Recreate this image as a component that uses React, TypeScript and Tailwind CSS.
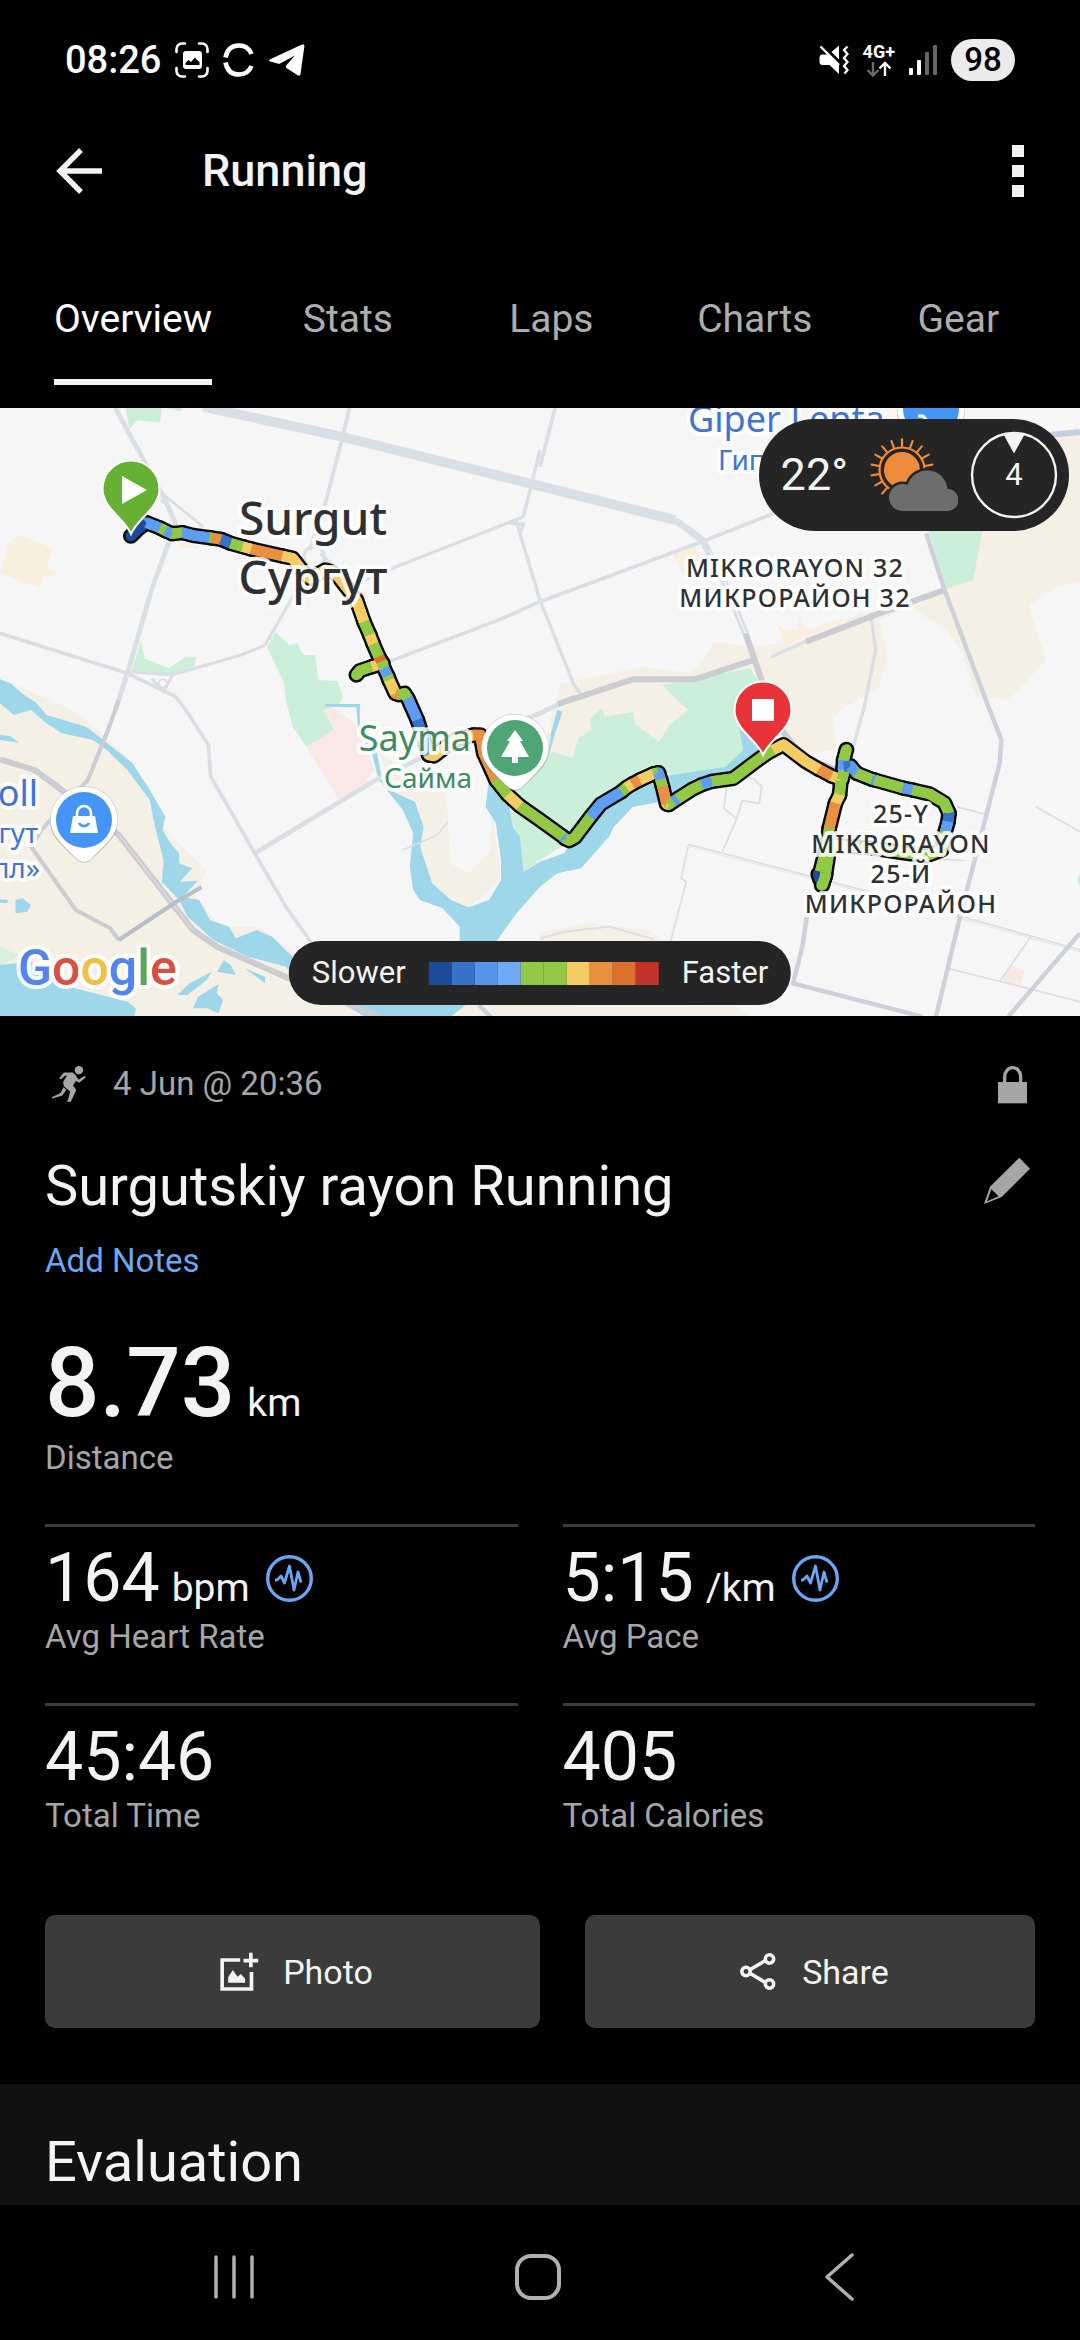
import type { ReactNode } from "react";

type TabProps = {
  label: string;
  active?: boolean;
};

const TABS = ["Stats", "Laps", "Charts", "Gear"];

const NAVY = "#1d4b99";
const BLUE = "#3772c9";
const SKY = "#5f9df2";
const GREEN = "#92c944";
const YELLOW = "#f4cd62";
const ORANGE = "#ea9041";
const RUST = "#dc712d";

const ROUTE: [string, string][] = [
  [NAVY, "380,408 400,388 425,368"],
  [SKY, "425,368 465,384"],
  [GREEN, "465,384 480,392"],
  [SKY, "480,392 500,401"],
  [GREEN, "500,401 530,398"],
  [SKY, "530,398 560,406 608,413"],
  [GREEN, "608,413 616,414"],
  [ORANGE, "616,414 642,418"],
  [BLUE, "642,418 670,430"],
  [GREEN, "670,430 705,440"],
  [YELLOW, "705,440 730,447"],
  [ORANGE, "730,447 820,468"],
  [YELLOW, "820,468 850,475 880,515 900,535 945,510 975,520 1005,560 1035,600 1057,665"],
  [GREEN, "1057,665 1074,705"],
  [YELLOW, "1074,705 1084,732"],
  [GREEN, "1084,732 1100,770"],
  [GREEN, "1035,825 1045,812 1080,800"],
  [YELLOW, "1080,800 1112,790"],
  [RUST, "1100,770 1108,785"],
  [GREEN, "1108,785 1115,805"],
  [SKY, "1115,805 1126,828"],
  [GREEN, "1126,828 1130,840"],
  [YELLOW, "1130,840 1148,880"],
  [ORANGE, "1148,880 1158,884"],
  [GREEN, "1158,884 1175,880 1184,895"],
  [SKY, "1184,895 1212,960"],
  [BLUE, "1212,960 1228,1010"],
  [SKY, "1228,1010 1245,1065"],
  [YELLOW, "1245,1065 1260,1068 1320,1020 1375,1005"],
  [ORANGE, "1375,1005 1395,1005 1405,1060 1440,1140"],
  [GREEN, "1440,1140 1475,1185"],
  [YELLOW, "1475,1185 1510,1218"],
  [GREEN, "1510,1218 1568,1260 1635,1310"],
  [SKY, "1635,1310 1641,1316"],
  [GREEN, "1641,1316 1653,1322 1670,1312 1715,1250"],
  [SKY, "1715,1250 1745,1212 1805,1175"],
  [GREEN, "1805,1175 1820,1162"],
  [YELLOW, "1820,1162 1836,1152"],
  [ORANGE, "1836,1152 1858,1140"],
  [YELLOW, "1858,1140 1898,1121"],
  [GREEN, "1898,1121 1912,1118"],
  [SKY, "1912,1118 1918,1138"],
  [GREEN, "1918,1138 1924,1160"],
  [ORANGE, "1924,1160 1936,1212"],
  [YELLOW, "1936,1212 1942,1214"],
  [GREEN, "1942,1214 1956,1204"],
  [SKY, "1956,1204 1968,1196"],
  [GREEN, "1968,1196 2010,1168 2038,1154"],
  [SKY, "2038,1154 2068,1144"],
  [GREEN, "2068,1144 2130,1135 2190,1088 2225,1062 2245,1050"],
  [YELLOW, "2245,1050 2275,1034 2340,1085 2378,1108"],
  [ORANGE, "2378,1108 2415,1128"],
  [YELLOW, "2415,1128 2442,1138"],
  [GREEN, "2445,1140 2452,1110"],
  [SKY, "2448,1110 2450,1080"],
  [GREEN, "2450,1080 2458,1048"],
  [BLUE, "2450,1100 2470,1098"],
  [SKY, "2470,1098 2488,1120"],
  [GREEN, "2488,1120 2532,1138"],
  [SKY, "2532,1138 2540,1140"],
  [GREEN, "2540,1140 2622,1164"],
  [SKY, "2622,1164 2650,1170"],
  [GREEN, "2650,1170 2700,1182 2742,1208 2756,1240"],
  [BLUE, "2756,1240 2753,1265"],
  [SKY, "2753,1265 2745,1295"],
  [GREEN, "2745,1295 2735,1350 2690,1368 2620,1358 2540,1345 2410,1335"],
  [GREEN, "2442,1142 2438,1185"],
  [YELLOW, "2438,1185 2426,1210"],
  [ORANGE, "2426,1210 2408,1285"],
  [GREEN, "2408,1285 2402,1340 2405,1370 2396,1430 2386,1456"],
  [GREEN, "2398,1350 2382,1415"],
  [NAVY, "2376,1422 2382,1440"],
  [GREEN, "2398,1420 2388,1456"],
];

const LEGEND = [
  "bg-[#1d4b99]",
  "bg-[#3772c9]",
  "bg-[#5695eb]",
  "bg-[#6ea9f8]",
  "bg-[#92c944]",
  "bg-[#92c944]",
  "bg-[#f4cd62]",
  "bg-[#ea9041]",
  "bg-[#dc712d]",
  "bg-[#c1332a]",
];

const SUN_RAYS = [-140, -120, -100, -80, -60, -40, -20, 0, 20, 40, 60, 80];

function StatusBar() {
  return (
    <div className="flex h-[120px] items-center justify-between px-[65px] text-white">
      <div className="flex items-center gap-3.5">
        <span className="text-[38px] leading-[46px] font-medium">08:26</span>
        <svg viewBox="0 0 34 36" className="h-9 w-[34px]" fill="none" aria-hidden>
          <path
            d="M1.5 10V7a5.500 5.500 0 0 1 5.500-5.500h3M24 1.500h3A5.500 5.500 0 0 1 32.500 7v3M32.500 26v3a5.500 5.500 0 0 1-5.500 5.500h-3M10 34.500H7A5.500 5.500 0 0 1 1.500 29v-3"
            stroke="currentColor"
            strokeWidth="2.6"
            strokeLinecap="round"
          />
          <rect x="8" y="9" width="19" height="18" rx="3" fill="currentColor" />
          <path d="M10.500 23v-2l3-3 2.500 2 4-4.500 2 2.500 2.500 2v3z" fill="#000" />
        </svg>
        <svg viewBox="0 0 32 34" className="h-[34px] w-8" fill="none" aria-hidden>
          <path
            d="M2.500 14.500C4 6.500 9 2.500 16 2.500c6 0 10.500 3.500 12.500 8.500M2.500 19.500C4 27.500 9 31.500 16 31.500c6 0 10.500-3.500 12.500-8.500"
            stroke="currentColor"
            strokeWidth="4.600"
          />
        </svg>
        <svg viewBox="0 0 36 32" className="h-8 w-9" fill="currentColor" aria-hidden>
          <path d="M1.200 15.200 33 .6c1.500-.6 2.600.1 2.400 1.700L31.500 30c-.3 1.600-1.500 2-2.900 1.200L17.500 24c-1-.8-1-1.800-.1-2.700L26 11.500 11.500 19.300c-1 .6-2 .7-3 .3L1.300 17.600c-1.500-.5-1.500-1.600-.1-2.400z" />
        </svg>
      </div>
      <div className="flex items-center gap-3.5">
        <svg viewBox="0 0 30 30" className="h-[30px] w-[30px]" aria-hidden>
          <path d="M3.500 9.500h5.500L20 20v9L10.500 20H3.500C1.500 20 .5 19 .5 17v-4.500c0-2 1-3 3-3zM20 .5v14L12.500 7z" fill="currentColor" />
          <path d="M1.500 1.500 20 20" stroke="currentColor" strokeWidth="2.400" />
          <path
            d="m28.500 1.500-3.500 3.500 3.500 4-3.500 4 3.500 4-3.500 4 3.500 4-3 3.500"
            fill="none"
            stroke="currentColor"
            strokeWidth="2.400"
            strokeLinejoin="round"
          />
        </svg>
        <div className="flex flex-col items-center">
          <span className="text-[18px] leading-[18px] font-bold">4G+</span>
          <svg viewBox="0 0 26 16" className="h-4 w-[26px]" fill="none" strokeWidth="2.400" aria-hidden>
            <path d="M7 1v13M1.500 9 7 14.500 12.500 9" stroke="#6b6b6b" />
            <path d="M19 15V2M13.500 7.500 19 2l5.500 5.500" stroke="currentColor" />
          </svg>
        </div>
        <svg viewBox="0 0 28 30" className="h-[30px] w-7" aria-hidden>
          <rect x="0" y="23" width="4" height="7" rx="1" fill="#fff" />
          <rect x="8" y="15" width="4" height="15" rx="1" fill="#fff" />
          <rect x="16" y="7" width="4" height="23" rx="1" fill="#666" />
          <rect x="24" y="0" width="4" height="30" rx="1" fill="#666" />
        </svg>
        <span className="flex h-[42px] w-16 items-center justify-center rounded-full bg-[#ececec] text-[33px] leading-10 font-medium text-black">
          98
        </span>
      </div>
    </div>
  );
}

function Header() {
  return (
    <header className="flex h-[102px] items-center px-[56px] text-[#f3f3f3]">
      <button type="button" aria-label="Back">
        <svg viewBox="0 0 46 46" className="h-[46px] w-[46px]" fill="none" aria-hidden>
          <path d="M25 2 4 23l21 21M4 23h42" stroke="currentColor" strokeWidth="5.400" />
        </svg>
      </button>
      <h1 className="ml-[100px] flex-1 text-[45px] leading-[54px] font-medium">Running</h1>
      <button type="button" aria-label="More options" className="flex flex-col gap-2">
        <span className="size-3 bg-current" />
        <span className="size-3 bg-current" />
        <span className="size-3 bg-current" />
      </button>
    </header>
  );
}

function Tab({ label, active = false }: TabProps) {
  return (
    <button
      type="button"
      role="tab"
      aria-selected={active}
      className={`pt-[74px] text-[39px] leading-[46px] ${
        active ? "px-[34px] text-white" : "flex-1 text-[#adadad]"
      }`}
    >
      <span
        className={`inline-block border-b-[6px] pb-[37px] ${
          active ? "border-[#f3f3f3]" : "border-transparent"
        }`}
      >
        {label}
      </span>
    </button>
  );
}

function Pin({ x, y, color, children }: { x: number; y: number; color: string; children: ReactNode }) {
  return (
    <g transform={`translate(${x} ${y})`}>
      <path
        d="M0 0C-6-15-28.500-26-28.500-45a28.500 28.500 0 0 1 57 0C28.500-26 6-15 0 0z"
        fill={color}
        stroke="#fff"
        strokeWidth="2"
      />
      {children}
    </g>
  );
}

function PlaceMarker({ x, y, color, children }: { x: number; y: number; color: string; children: ReactNode }) {
  return (
    <g transform={`translate(${x} ${y})`}>
      <path
        d="M-34 2C-34 16-24 24-8 39 c5 5 11 5 16 0C24 24 34 16 34 0A34 34 0 0 0-34 0z"
        fill="#8a8a8a"
        opacity="0.45"
      />
      <path d="M-33.500 0C-33.500 14-24 22-8 38c5 5 11 5 16 0C24 22 33.500 14 33.500 0a33.500 33.500 0 0 0-67 0z" fill="#fff" />
      <circle r="28" fill={color} />
      {children}
    </g>
  );
}

function RouteMap() {
  return (
    <svg
      viewBox="0 0 1080 608"
      preserveAspectRatio="xMidYMid slice"
      className="block h-full w-full font-['Noto_Sans',sans-serif]"
      role="img"
      aria-label="Route map"
    >
      <rect width="1080" height="608" fill="#f6f6f6" />
      <g transform="scale(.34436 .33333) translate(0 -24)" fill="none" strokeLinejoin="round">
        {/* land */}
        <g fill="#f4f0e6">
          <path d="M0 838 60 860 200 925 250 960 370 1070 440 1180 480 1290 600 1410 570 1490 640 1580 750 1580 860 1660 1200 1800 1568 1815 2130 1818 2180 1850H0z" />
          <path d="M3058 120 3136 90V545L3068 560 2988 615 3038 780 2928 900 2833 890 2793 755 2748 690 2648 625 2743 567 2826 540 2853 392 2968 390 3068 300z" />
          <path d="M1628 850 1868 800 2008 820 2040 785 2073 725 2188 740 2338 720 2498 640 2648 620 2553 660 2578 770 2553 860 2443 930 2418 955 2433 1050 2298 1062 2168 1100 1900 1140 1568 1080 1600 960z" />
          <path d="M1100 1060 1290 1180 1430 1150 1430 1230 1455 1440 1360 1525 1260 1460 1150 1180z" />
          <path d="M1568 1600 1698 1570 1878 1590 1938 1622H1568z" />
        </g>
        <g fill="#f8efdc">
          <path d="M25 430 55 405 155 445 135 505 165 520 150 530 130 525 115 565 0 520z" />
          <path d="M530 425 580 440 575 446 525 440z" />
          <path d="M1953 465 2018 440 2048 490 2088 520 1998 545z" />
          <path d="M2258 670 2278 690 2313 690 2318 650 2343 690 2448 655 2438 670 2278 735z" />
        </g>
        <path d="M1290 1170 1425 1140V1355L1360 1420 1308 1390 1300 1240z" fill="#f6f6f6" />
        <g fill="#f8e9e6">
          <path d="M940 925H970L1025 965 1090 1110 1060 1140 1085 1150 985 1200 890 1040 970 990z" />
          <path d="M2938 1695 2976 1712 2963 1757 2908 1745z" />
        </g>
        <g fill="#cbefd8">
          <path d="M365 24H470L465 68 400 60 375 88z" />
          <path d="M480 24H530L525 34z" />
          <path d="M460 290 482 310 470 312z" />
          <path d="M410 720 420 775 490 805 540 770H570L565 800 490 828 380 820z" />
          <path d="M800 695 840 735 865 730 880 765H915L925 840 980 843 997 890 985 915 940 930 970 990 890 1040 850 980 830 900 825 850 775 740z" />
          <path d="M2696 392H2853L2826 540 2748 567z" />
          <path d="M1923 855 2178 805 2220 870 2158 960V1070L2118 1100 1948 1125 1908 1100 1748 1200 1648 1330 1568 1380 1520 1415 1500 1300 1465 1200 1568 1080 1608 1055 1663 1075 1678 1015 1718 990 1713 955 1748 925 1758 950 1838 935 1843 970 1913 1025 1948 970 1998 930z" />
          <path d="M3136 1420V1460L3128 1440z" />
          <path d="M0 1640 55 1665 0 1700z" opacity="0.6" />
        </g>
        {/* water */}
        <g fill="#9fd7ea">
          <path d="M0 838 30 850 70 885 105 908 135 945 250 980 300 1020 385 1090 435 1170 480 1250 472 1290 495 1330 520 1360 520 1390 558 1405 522 1445 575 1442 530 1490 578 1500 610 1560 665 1580 685 1615 745 1590 790 1610 850 1670 1000 1790 1370 1800 1310 1850 1060 1850 850 1725 830 1700 720 1670 620 1620 545 1550 520 1500 470 1445 475 1380 450 1280 435 1200 370 1110 310 1050 270 1020 180 1000 135 970 90 930 40 945 0 910z" />
          <path d="M945 912H1045V990L1095 1060 1110 1140 1150 1180 1205 1205 1230 1280 1220 1340 1255 1450 1310 1500 1360 1522 1420 1500 1455 1440V1380L1440 1270 1410 1220 1420 1140 1470 1180 1490 1280 1510 1310 1520 1415 1568 1385 1638 1360 1698 1270 1768 1200 1918 1130 2108 1100 2158 1050 2148 990 2200 1020 2210 1070 2118 1120 2018 1135 1948 1200 1838 1220 1783 1280 1768 1310 1688 1405 1618 1420 1568 1460 1500 1540 1430 1640H1335V1580L1285 1525 1220 1500 1200 1470 1190 1400 1200 1300 1170 1230 1100 1140 1080 1060 1040 990 1035 922 945 920z" />
          <path d="M1590 1080 1600 1000 1618 930 1634 935 1612 1000z" />
          <path d="M0 1695 90 1685 180 1755 370 1805 395 1825 390 1850H0z" />
          <path d="M650 1680 670 1695 685 1725 630 1715zM515 1785 550 1750 615 1715 600 1740 545 1785zM560 1825 575 1790 635 1752 630 1780 648 1800 635 1840 600 1825zM710 1705 770 1730V1750zM45 1500 65 1495 90 1515 80 1535 45 1540zM0 1498 25 1500 20 1510 0 1508zM0 1005 30 1008 55 1028 0 1020z" />
        </g>
        {/* roads */}
        <g stroke="#d9dfe5">
          <path d="M590 20 1000 112 1568 258 1960 360" strokeWidth="29" />
          <path d="M1960 360 2040 420 2110 560 2165 700" strokeWidth="20" />
          <path d="M2060 450 2110 560 2165 700" stroke="#f2f4f6" strokeWidth="4" />
          <path d="M335 24 480 300 510 370 440 570 370 820 335 930" strokeWidth="14" />
          <path d="M470 280 590 380" strokeWidth="8" />
          <path d="M1015 24 990 130 945 310 900 450" strokeWidth="11" />
          <circle cx="912" cy="470" r="30" strokeWidth="9" />
          <path d="M930 460 1060 590" strokeWidth="9" />
          <path d="M0 700 370 820 450 860 510 890 540 930 605 1035 612 1130 740 1360 830 1520 905 1630" strokeWidth="11" />
          <path d="M380 815 500 825 700 765 770 735 850 590 890 490M440 835 475 875 500 828" strokeWidth="9" />
          <circle cx="473" cy="850" r="12" strokeWidth="5" />
          <path d="M1060 540 1140 505 1520 350 1568 150M1498 360 1568 600 1665 850 1690 890M1480 370 1520 372 1510 400" strokeWidth="10" />
          <path d="M1130 785 1460 655 1568 605 2038 425 2260 335M1568 200 1612 24" strokeWidth="11" />
          <path d="M740 1360 1100 1135 1250 1060 1568 940 1668 890" strokeWidth="14" />
          <path d="M2240 770 2350 720M2528 640 2543 750 2510 920 2478 1040" strokeWidth="10" />
          <path d="M1998 1335 2700 1525 3136 1652" strokeWidth="10" />
          <path d="M1998 1337 2700 1527 3136 1654" stroke="#f2f4f6" strokeWidth="3" />
          <path d="M1998 1340 1978 1435 1993 1445 1948 1622M2098 1355 2140 1255 2155 1202 2205 1210 2212 1160 2190 1138 2130 1120M2113 1140 2102 1225 2138 1255M2753 1705 3136 1805M2993 1610 2903 1745M3008 1220 3136 1295M2778 1220 2868 1245M2700 1375 2798 1382M1568 1615 1640 1595 1770 1580 1900 1618M1170 1350 1270 1305 1300 1265" strokeWidth="5" />
        </g>
        <g stroke="#cbcdd3">
          <path d="M345 900 310 1000 255 1140 120 1290 90 1340 220 1530 320 1585 345 1620" strokeWidth="12" />
          <path d="M0 1078 100 1110 180 1170 345 1305 500 1510 560 1590 630 1640 850 1740 1100 1850" strokeWidth="18" />
          <path d="M345 1305 500 1510 560 1590" stroke="#dedcda" strokeWidth="4" />
          <path d="M345 1620 520 1500 585 1462" stroke="#b9bfc8" strokeWidth="12" />
          <path d="M1620 912 1838 838 2018 838 2188 780M2340 725 2528 650 2743 570M2165 700 2215 850M2270 990 2330 1070 2430 1110" strokeWidth="18" />
          <path d="M2690 400 2743 570 2863 900 2908 1020 2903 1090 2868 1230 2788 1550 2718 1850M2343 1550 2330 1640 2303 1750 2678 1850M3136 1600 2928 1850M1390 1815 1425 1850" strokeWidth="13" stroke="#cdd1da" />
          <path d="M3050 105 3136 96" stroke="#c5cfe0" strokeWidth="18" />
        </g>
        {/* route */}
        <g strokeLinecap="round" stroke="#0b0b0b" strokeWidth="46">
          {ROUTE.map(([, points]) => (
            <polyline key={points} points={points} />
          ))}
        </g>
        <g strokeLinecap="round" strokeWidth="31">
          {ROUTE.map(([color, points]) => (
            <polyline key={points} points={points} stroke={color} />
          ))}
        </g>
        <g strokeWidth="31">
          {ROUTE.map(([color, points]) => (
            <polyline key={points} points={points} stroke={color} />
          ))}
        </g>
      </g>

      <PlaceMarker x={84} y={412} color="#4595f7">
        <path d="M-11-4H11L14 13H-14z" fill="#fff" />
        <path d="M-7-3v-4a7 7 0 0 1 14 0v4" fill="none" stroke="#fff" strokeWidth="2.500" />
        <path d="M-5 3c2 4 8 4 10 0" fill="none" stroke="#4595f7" strokeWidth="2.500" />
      </PlaceMarker>
      <PlaceMarker x={515} y={340} color="#4fa576">
        <path d="M0-18 8-7H5L14 9H3v6H-3V9H-14L-5-7H-8z" fill="#fff" />
      </PlaceMarker>
      <PlaceMarker x={931} y={1} color="#4595f7">
        <path d="M-13 7h5l7 8h10" fill="none" stroke="#fff" strokeWidth="3" />
      </PlaceMarker>

      <g stroke="#fff" strokeOpacity="0.85" strokeWidth="8" strokeLinejoin="round" style={{ paintOrder: "stroke" }}>
        <g fill="#2e3033" textAnchor="middle" className="text-[46px] font-medium">
          <text x="313" y="127">Surgut</text>
          <text x="313" y="186">Сургут</text>
        </g>
        <g fill="#2e3033" textAnchor="middle" className="text-[25px] font-medium tracking-wider">
          <text x="795" y="169">MIKRORAYON 32</text>
          <text x="795" y="199">МИКРОРАЙОН 32</text>
          <text x="901" y="415">25-Y</text>
          <text x="901" y="445">MIKRORAYON</text>
          <text x="901" y="475">25-Й</text>
          <text x="901" y="505">МИКРОРАЙОН</text>
        </g>
        <g fill="#3d8b63" textAnchor="end">
          <text x="471" y="343" className="text-[36px]">Sayma</text>
          <text x="472" y="380" className="text-[28px]">Сайма</text>
        </g>
        <g fill="#3f74d6">
          <text x="688" y="24" className="text-[36px]">Giper Lenta</text>
          <text x="718" y="62" className="text-[28px]">Гип</text>
          <text x="38" y="398" textAnchor="end" className="text-[36px]">oll</text>
          <text x="38" y="435" textAnchor="end" className="text-[28px]">гут</text>
          <text x="40" y="470" textAnchor="end" className="text-[28px]">лл»</text>
        </g>
        <text x="18" y="577" className="font-['Roboto',sans-serif] text-[50px] font-medium">
          <tspan fill="#5383ec">G</tspan>
          <tspan fill="#d85140">o</tspan>
          <tspan fill="#f1bf42">o</tspan>
          <tspan fill="#5383ec">g</tspan>
          <tspan fill="#58a55c">l</tspan>
          <tspan fill="#d85140">e</tspan>
        </text>
      </g>

      <Pin x={131} y={126} color="#66b034">
        <path d="M-9-58 16-44-9-30z" fill="#fff" />
      </Pin>
      <Pin x={763} y={347} color="#ea3338">
        <path d="M-11-56h22v22h-22z" fill="#fff" />
      </Pin>
    </svg>
  );
}

function WeatherPill() {
  return (
    <div className="absolute top-[11px] right-[11px] flex h-28 items-center rounded-full bg-[#252525] pr-[11px] pl-[22px] text-[#f3f3f3]">
      <span className="text-[45px] leading-[54px]">22°</span>
      <svg viewBox="0 0 88 74" className="ml-[22px] h-[74px] w-[88px]" fill="none" aria-hidden>
        <g stroke="#ee8a3c" strokeWidth="2.200" strokeLinecap="round">
          <circle cx="32" cy="32" r="22.500" />
          {SUN_RAYS.map((angle) => (
            <path key={angle} d="M32 9V1.200" transform={`rotate(${angle} 32 32)`} />
          ))}
        </g>
        <circle cx="32" cy="32" r="18" fill="#ee8a3c" />
        <path
          d="M32.500 73a13.500 13.500 0 0 1 0-27c2 0 3.500.3 5 1a20.500 20.500 0 0 1 40 4 11 11 0 0 1 0 22z"
          fill="#6d6d6d"
          stroke="#252525"
          strokeWidth="5"
          style={{ paintOrder: "stroke" }}
        />
      </svg>
      <span className="relative ml-3 flex size-[88px] items-center justify-center">
        <svg viewBox="0 0 88 88" className="absolute inset-0" fill="none" aria-hidden>
          <circle cx="44" cy="44" r="42" stroke="#f3f3f3" strokeWidth="2.400" />
          <path d="M33.500 3.500Q44-.5 54.500 3.500L44 22.500z" fill="#f3f3f3" />
        </svg>
        <span className="text-[31px] leading-9">4</span>
      </span>
    </div>
  );
}

function PaceLegend() {
  return (
    <div className="absolute bottom-[11px] left-1/2 flex h-16 -translate-x-1/2 items-center gap-[23px] rounded-full bg-[#252525] px-[23px] text-[31px] leading-9 text-[#f3f3f3]">
      <span>Slower</span>
      <span className="flex">
        {LEGEND.map((color, i) => (
          <span key={i} className={`size-[23px] ${color}`} />
        ))}
      </span>
      <span>Faster</span>
    </div>
  );
}

function PulseIcon() {
  return (
    <svg viewBox="0 0 47 47" className="size-[47px] text-[#6ba6f3]" fill="none" stroke="currentColor" aria-hidden>
      <circle cx="23.500" cy="23.500" r="21.800" strokeWidth="3.400" />
      <path d="M9 25h2l4-4 3.500 7 5-17 4.500 24 4-18 3 10.500" strokeWidth="2.800" strokeLinejoin="round" />
    </svg>
  );
}

function Metric({
  value,
  unit,
  label,
  pulse = false,
}: {
  value: string;
  unit?: string;
  label: string;
  pulse?: boolean;
}) {
  return (
    <div className="border-t-[3px] border-[#3c3c3c] pt-3 pb-[46px]">
      <div className="flex items-center gap-4">
        <p className="flex items-baseline gap-3 text-[68px] leading-[78px]">
          {value}
          {unit && <span className="text-[39px] leading-none">{unit}</span>}
        </p>
        {pulse && <PulseIcon />}
      </div>
      <p className="text-[#a6a6a6]">{label}</p>
    </div>
  );
}

function Summary() {
  return (
    <main className="px-[45px] pt-12 pb-14 text-[33px] leading-10 text-[#f3f3f3]">
      <div className="flex items-center text-[#a6a6a6]">
        <svg viewBox="14 44 126 118" className="h-[38px] w-[42px]" fill="currentColor" aria-hidden>
          <circle cx="117" cy="60" r="13" />
          <path d="M70 67H98L106 74 116 90 134 78 139 82 118 99 108 93 99 108 109 122 92 158 81 159 90 126 70 110 68 96 80 77H73L62 88 56 85z" />
          <path d="M69 113 78 121 66 139 34 148 33 144 60 131z" />
        </svg>
        <span className="ml-[26px] flex-1">4 Jun @ 20:36</span>
        <svg viewBox="114 72 111 120" className="h-10 w-[37px]" aria-label="Private">
          <path d="M114 126h87v64h-87z" fill="currentColor" />
          <path d="M134 128v-18a24 27 0 0 1 48 0v18" fill="none" stroke="currentColor" strokeWidth="10" />
        </svg>
      </div>

      <div className="mt-[49px] flex items-start justify-between">
        <h2 className="text-[56px] leading-[66px]">Surgutskiy rayon Running</h2>
        <button type="button" aria-label="Edit title" className="text-[#a6a6a6]">
          <svg viewBox="72 339 153 153" className="size-[51px]" aria-hidden>
            <path
              d="M178 353 210 386 125 471 72 492 90 440zM94 448 81 484 116 469z"
              fill="currentColor"
              fillRule="evenodd"
            />
          </svg>
        </button>
      </div>
      <button type="button" className="mt-[22px] block text-[#6ba6f3]">
        Add Notes
      </button>

      <p className="mt-[47px] flex items-baseline gap-3 text-[96px] leading-[110px] font-medium">
        8.73
        <span className="text-[39px] leading-none font-normal">km</span>
      </p>
      <p className="text-[#a6a6a6]">Distance</p>

      <div className="mt-[46px] grid grid-cols-2 gap-x-[45px]">
        <Metric value="164" unit="bpm" label="Avg Heart Rate" pulse />
        <Metric value="5:15" unit="/km" label="Avg Pace" pulse />
        <Metric value="45:46" label="Total Time" />
        <Metric value="405" label="Total Calories" />
      </div>

      <div className="mt-[33px] grid grid-cols-[11fr_10fr] gap-[45px] text-[34px]">
        <button
          type="button"
          className="flex h-[113px] items-center justify-center gap-6 rounded-[10px] bg-[#3b3b3b] pl-2"
        >
          <svg viewBox="60 60 116 117" className="size-[39px]" fill="none" aria-hidden>
            <path d="M120 84H66V171H154V120M152 62V106M130 86H174" stroke="currentColor" strokeWidth="11" />
            <path d="M84 152V136L98 114 112 134 122 126 135 140V152z" fill="currentColor" />
          </svg>
          Photo
        </button>
        <button
          type="button"
          className="flex h-[113px] items-center justify-center gap-6 rounded-[10px] bg-[#3b3b3b] pl-2"
        >
          <svg viewBox="0 0 39 39" className="size-[39px]" fill="none" stroke="currentColor" aria-hidden>
            <path d="M8 19.500 29 7M8 19.500 29 32" strokeWidth="3.500" />
            <g fill="#3b3b3b" strokeWidth="3.500">
              <circle cx="7" cy="19.500" r="4.200" />
              <circle cx="30.500" cy="7" r="4.200" />
              <circle cx="30.500" cy="32" r="4.200" />
            </g>
          </svg>
          Share
        </button>
      </div>
    </main>
  );
}

function SystemNav() {
  return (
    <div className="flex h-[135px] items-center justify-between pt-2 pr-[222px] pl-[214px] text-[#b0b0b0]">
      <button type="button" aria-label="Recent apps">
        <svg viewBox="4 0 40 48" className="h-12 w-10" stroke="currentColor" strokeWidth="3.500" strokeLinecap="round" aria-hidden>
          <path d="M6 4v40M24 4v40M42 4v40" />
        </svg>
      </button>
      <button type="button" aria-label="Home">
        <svg viewBox="0 0 48 48" className="size-12" fill="none" aria-hidden>
          <rect x="3" y="3" width="42" height="42" rx="14" stroke="currentColor" strokeWidth="4" />
        </svg>
      </button>
      <button type="button" aria-label="Back">
        <svg viewBox="0 0 36 48" className="h-12 w-9" fill="none" aria-hidden>
          <path d="M30 2 5 24l25 22" stroke="currentColor" strokeWidth="3.500" strokeLinecap="round" strokeLinejoin="round" />
        </svg>
      </button>
    </div>
  );
}

export default function App() {
  return (
    <div className="flex min-h-screen flex-col bg-black font-['Roboto',sans-serif]">
      <StatusBar />
      <Header />
      <nav role="tablist" className="flex h-[186px] items-start px-5">
        <Tab label="Overview" active />
        {TABS.map((label) => (
          <Tab key={label} label={label} />
        ))}
      </nav>

      <section className="relative h-[608px] overflow-hidden">
        <RouteMap />
        <WeatherPill />
        <PaceLegend />
      </section>

      <Summary />

      <section className="flex-1 bg-[#111] px-[45px] pt-[45px] pb-2.5">
        <h2 className="text-[56px] leading-[66px] text-[#f3f3f3]">Evaluation</h2>
      </section>
      <SystemNav />
    </div>
  );
}
